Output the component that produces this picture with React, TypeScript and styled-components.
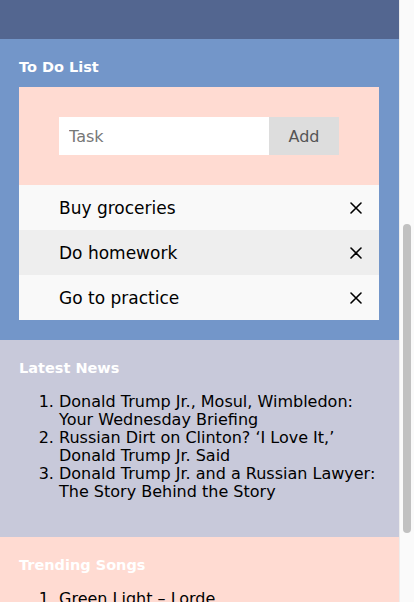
import styled, { createGlobalStyle } from "styled-components";

const GlobalStyle = createGlobalStyle`
  html, body {
    margin: 0;
    padding: 0;
    overflow: hidden;
  }
  body {
    font-family: "DejaVu Sans", Verdana, sans-serif;
  }
`;

const tasks = ["Buy groceries", "Do homework", "Go to practice"];

const news = [
  "Donald Trump Jr., Mosul, Wimbledon: Your Wednesday Briefing",
  "Russian Dirt on Clinton? \u2018I Love It,\u2019 Donald Trump Jr. Said",
  "Donald Trump Jr. and a Russian Lawyer: The Story Behind the Story",
];

const songs = ["Green Light \u2013 Lorde", "Despacito \u2013 Luis Fonsi", "Believer \u2013 Imagine Dragons"];

const CloseIcon = () => (
  <svg width="12" height="12" viewBox="0 0 12 12">
    <path d="M1 1 L11 11 M11 1 L1 11" stroke="#000" strokeWidth="1.6" strokeLinecap="round" />
  </svg>
);

const App = () => {
  return (
    <Page>
      <GlobalStyle />
      <Main>
        <Header />
        <Section $bg="#7396c9">
          <Title>To Do List</Title>
          <Card>
            <Form>
              <TaskInput placeholder="Task" />
              <AddButton>Add</AddButton>
            </Form>
            {tasks.map((t, i) => (
              <TaskRow key={t} $odd={i % 2 === 1}>
                <span>{t}</span>
                <RemoveButton>
                  <CloseIcon />
                </RemoveButton>
              </TaskRow>
            ))}
          </Card>
        </Section>
        <Section $bg="#c8c9da">
          <Title>Latest News</Title>
          <List>
            {news.map((n) => (
              <li key={n}>{n}</li>
            ))}
          </List>
        </Section>
        <Section $bg="#ffdbd2">
          <Title>Trending Songs</Title>
          <List>
            {songs.map((s) => (
              <li key={s}>{s}</li>
            ))}
          </List>
        </Section>
      </Main>
      <Track>
        <Thumb />
      </Track>
    </Page>
  );
};

export default App;

const Page = styled.div`
  display: flex;
  width: 414px;
  height: 602px;
  overflow: hidden;
`;

const Main = styled.div`
  width: 399px;
  flex-shrink: 0;
  display: flex;
  flex-direction: column;
`;

const Header = styled.div`
  height: 39px;
  background: #536690;
  flex-shrink: 0;
`;

const Section = styled.section<{ $bg: string }>`
  background: ${(p) => p.$bg};
  padding: 20px 20px 20px 19px;
  flex-shrink: 0;
`;

const Title = styled.h2`
  margin: 0 0 11px;
  color: #fff;
  font-size: 14.5px;
  line-height: 17px;
  font-weight: bold;
`;

const Card = styled.div`
  width: 360px;
  background: #ffdbd2;
`;

const Form = styled.div`
  display: flex;
  padding: 30px 40px;
`;

const TaskInput = styled.input`
  flex: 1;
  min-width: 0;
  height: 38px;
  border: none;
  outline: none;
  padding: 0 10px;
  font-family: "DejaVu Sans", Verdana, sans-serif;
  font-size: 16px;
  color: #333;
  background: #fff;
  &::placeholder {
    color: #777;
  }
`;

const AddButton = styled.button`
  width: 70px;
  height: 38px;
  border: none;
  background: #dddddd;
  color: #555;
  font-family: "DejaVu Sans", Verdana, sans-serif;
  font-size: 16px;
  padding: 0;
`;

const TaskRow = styled.div<{ $odd: boolean }>`
  display: flex;
  align-items: center;
  justify-content: space-between;
  height: 45px;
  padding: 0 17px 0 40px;
  background: ${(p) => (p.$odd ? "#eeeeee" : "#f9f9f9")};
  font-size: 17px;
  color: #000;
`;

const RemoveButton = styled.span`
  display: flex;
  width: 12px;
  height: 12px;
`;

const List = styled.ol`
  margin: 16px 0;
  padding-left: 40px;
  font-size: 16px;
  line-height: 18px;
  color: #000;
`;

const Track = styled.div`
  width: 15px;
  flex-shrink: 0;
  background: #fafafa;
  border-left: 1px solid #ededed;
  padding: 224px 0 0 3px;
  box-sizing: border-box;
`;

const Thumb = styled.div`
  width: 8px;
  height: 309px;
  border-radius: 4px;
  background: #c1c1c1;
`;
